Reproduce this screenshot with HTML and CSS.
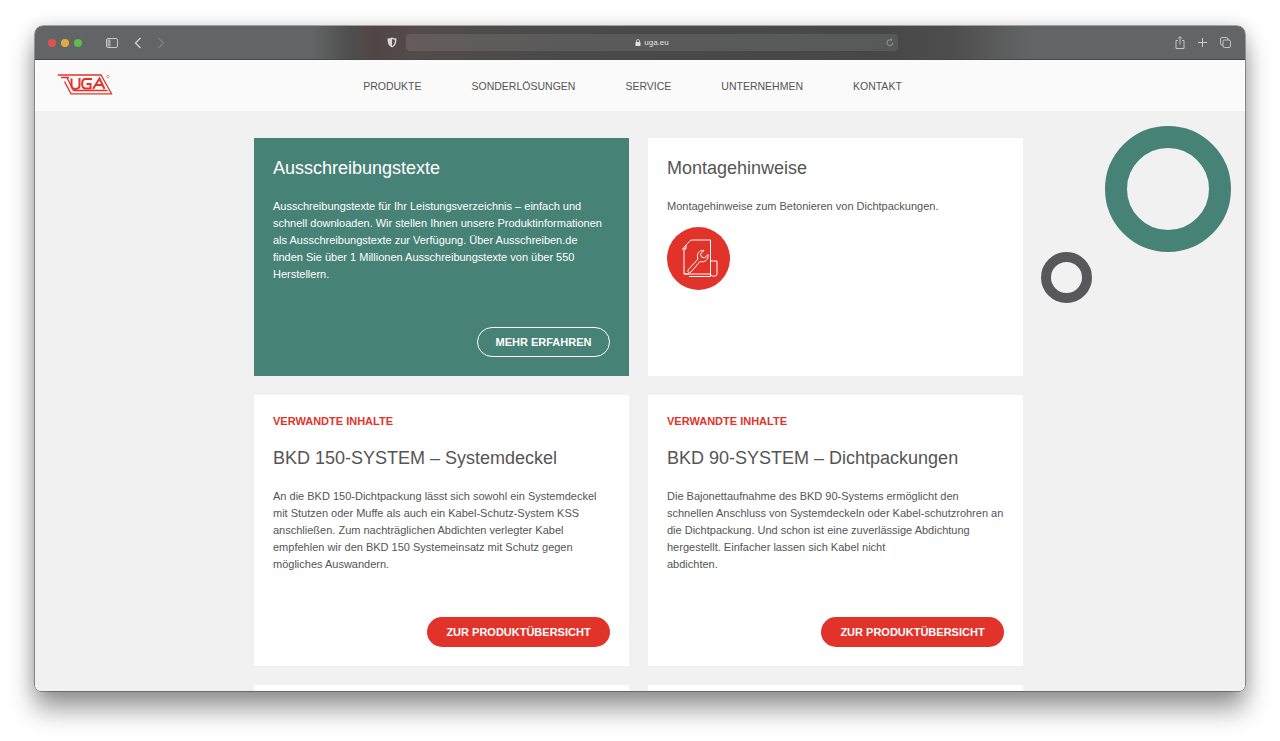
FILE: index.html
```html
<!DOCTYPE html>
<html lang="de">

<head>
  <meta charset="UTF-8" />
  <title>UGA</title>
  <link rel="stylesheet" href="styles.css">
</head>

<body>
  <div class="window">
    <div class="toolbar">
      <div class="lights">
        <span class="light red"></span>
        <span class="light yellow"></span>
        <span class="light green"></span>
      </div>
      <svg class="tool-icon sidebar-icon" width="12" height="10" viewBox="0 0 12 10">
        <rect x="0.5" y="0.5" width="11" height="9" rx="1.5" fill="none" stroke="#c9c9c9" />
        <rect x="1.5" y="1.5" width="3" height="7" fill="#a8a8a8" />
      </svg>
      <svg class="tool-icon back-icon" width="8" height="12" viewBox="0 0 8 12">
        <path d="M6.5 1 L1.5 6 L6.5 11" fill="none" stroke="#d4d4d4" stroke-width="1.3" />
      </svg>
      <svg class="tool-icon forward-icon" width="8" height="12" viewBox="0 0 8 12">
        <path d="M1.5 1 L6.5 6 L1.5 11" fill="none" stroke="#808080" stroke-width="1.3" />
      </svg>
      <svg class="tool-icon shield-icon" width="10" height="11" viewBox="0 0 10 11">
        <path d="M5 0.5 C3.5 1.2 2 1.5 0.5 1.5 C0.5 6 1.5 9 5 10.5 C8.500 9 9.500 6 9.500 1.500 C8 1.500 6.500 1.200 5 0.5 Z" fill="#d8d8d8" />
        <path d="M5 2 C6 2.400 7 2.700 8 2.800 C8 6 7.200 8 5 9.200 Z" fill="#5a5253" />
      </svg>
      <div class="address">
        <span class="address-text">
          <svg width="6" height="7" viewBox="0 0 6 7">
            <path d="M1.500 3 V2 a1.500 1.500 0 0 1 3 0 V3" fill="none" stroke="#e0e0e0" stroke-width="0.800" />
            <rect x="0.500" y="3" width="5" height="4" rx="0.600" fill="#e0e0e0" />
          </svg>
          uga.eu
        </span>
        <svg class="reload" width="8" height="9" viewBox="0 0 8 9">
          <path d="M6.800 4.800 A2.900 2.900 0 1 1 4 1.800 H5.500 M4.500 0.500 L5.800 1.800 L4.500 3" fill="none" stroke="#a6a6a6" stroke-width="0.800" />
        </svg>
      </div>
      <div class="tool-right">
        <svg width="10" height="13" viewBox="0 0 10 13">
          <path d="M3 4.500 H1 V12.500 H9 V4.500 H7 M5 8.500 V0.800 M3 2.600 L5 0.600 L7 2.600" fill="none" stroke="#cfcfcf" stroke-width="0.900" />
        </svg>
        <svg width="9" height="9" viewBox="0 0 9 9">
          <path d="M4.500 0 V9 M0 4.500 H9" fill="none" stroke="#cfcfcf" stroke-width="1" />
        </svg>
        <svg width="11" height="11" viewBox="0 0 11 11">
          <rect x="0.500" y="0.500" width="7.500" height="7.500" rx="1.500" fill="none" stroke="#cfcfcf" stroke-width="0.900" />
          <rect x="3" y="3" width="7.500" height="7.500" rx="1.500" fill="#636465" stroke="#cfcfcf" stroke-width="0.900" />
        </svg>
      </div>
    </div>

    <header class="site-header">
      <svg class="logo" width="56" height="21" viewBox="0 0 56 21">
        <g fill="none" stroke="#e2332a">
          <path d="M0.800 1 H44 L54.500 19.800 H14 L7.500 7.500" stroke-width="1.300" />
          <path d="M4 3.500 H12 M10 3.800 L16.500 16.500 H50.500" stroke-width="1.300" />
          <path d="M14.500 4.500 V11.500 C14.500 16 22.500 16 22.500 11.500 V4" stroke-width="2" />
          <path d="M35 5 H28.500 C24 5 24 14.500 28.500 14.500 H33.500 V10 H29.500" stroke-width="2" />
          <path d="M36 15 L42.500 4.500 L47.500 15 M38.500 11 H45.500" stroke-width="2" />
        </g>
        <circle cx="51" cy="2.500" r="1.300" fill="none" stroke="#e2332a" stroke-width="0.500" />
      </svg>
      <nav class="main-nav">
        <a href="#">PRODUKTE</a>
        <a href="#">SONDERLÖSUNGEN</a>
        <a href="#">SERVICE</a>
        <a href="#">UNTERNEHMEN</a>
        <a href="#">KONTAKT</a>
      </nav>
    </header>

    <main class="content">
      <div class="ring ring-big"></div>
      <div class="ring ring-small"></div>

      <div class="card-grid">
        <section class="card card-green">
          <h2>Ausschreibungstexte</h2>
          <p>Ausschreibungstexte für Ihr Leistungsverzeichnis – einfach und schnell downloaden. Wir stellen Ihnen unsere Produktinformationen als Ausschreibungstexte zur Verfügung. Über Ausschreiben.de finden Sie über 1 Millionen Ausschreibungstexte von über 550 Herstellern.</p>
          <a class="btn btn-outline" href="#">MEHR ERFAHREN</a>
        </section>

        <section class="card">
          <h2>Montagehinweise</h2>
          <p>Montagehinweise zum Betonieren von Dichtpackungen.</p>
          <svg class="doc-icon" width="63" height="63" viewBox="0 0 63 63">
            <circle cx="31.500" cy="31.500" r="31.500" fill="#e2332a" />
            <g fill="none" stroke="#fff" stroke-width="1">
              <path d="M19 18 L24 13 H43.500 V47 H17 V20 L19 18 V22 H15" transform="translate(0 0)" />
              <path d="M43.500 34 H50 V47 C50 50 44 50 43.500 47" />
              <path d="M17 47 H22 M43.500 47 V49.500 H22" />
              <path d="M21 43 L31 32 C29 27 32 23 37 23.500 L33.500 27 L34.500 30 L37.500 31 L41 27.500 C41.500 32.500 38 36 33 34.500 L24 45 C22 46 20 45 21 43 Z" />
            </g>
          </svg>
        </section>

        <section class="card card-related">
          <span class="kicker">VERWANDTE INHALTE</span>
          <h2>BKD 150-SYSTEM – Systemdeckel</h2>
          <p>An die BKD 150-Dichtpackung lässt sich sowohl ein Systemdeckel mit Stutzen oder Muffe als auch ein Kabel-Schutz-System KSS anschließen. Zum nachträglichen Abdichten verlegter Kabel empfehlen wir den BKD 150 Systemeinsatz mit Schutz gegen mögliches Auswandern.</p>
          <a class="btn btn-red" href="#">ZUR PRODUKTÜBERSICHT</a>
        </section>

        <section class="card card-related">
          <span class="kicker">VERWANDTE INHALTE</span>
          <h2>BKD 90-SYSTEM – Dichtpackungen</h2>
          <p>Die Bajonettaufnahme des BKD 90-Systems ermöglicht den schnellen Anschluss von Systemdeckeln oder Kabel-schutzrohren an die Dichtpackung. Und schon ist eine zuverlässige Abdichtung hergestellt. Einfacher lassen sich Kabel nicht<br>abdichten.</p>
          <a class="btn btn-red" href="#">ZUR PRODUKTÜBERSICHT</a>
        </section>

        <section class="card card-next"></section>
        <section class="card card-next"></section>
      </div>
    </main>
  </div>
</body>

</html>
```

FILE: styles.css
```css
html,
body {
  margin: 0;
  height: 741px;
  overflow: hidden;
  background: #fff;
}

body {
  font-family: "Liberation Sans", Arial, sans-serif;
  color: #555;
  padding: 26px 35px 0;
  box-sizing: border-box;
}

.window {
  height: 665px;
  border-radius: 8px 8px 6px 6px;
  overflow: hidden;
  display: flex;
  flex-direction: column;
  box-shadow: 0 18px 26px rgba(0, 0, 0, 0.4), 0 0 18px rgba(0, 0, 0, 0.16), 0 0 0 0.5px #666;
}

.toolbar {
  height: 34px;
  flex-shrink: 0;
  display: flex;
  align-items: center;
  box-sizing: border-box;
  border-bottom: 1px solid #484848;
  background: linear-gradient(90deg, #636465 0, #636465 23%, #4e4e4e 26%, #524645 28%, #544b4b 32%, #4a4a4a 42%, #474747 70%, #4e4e4e 76%, #636465 82%, #636465 100%);
}

.lights {
  display: flex;
  gap: 5px;
  margin-left: 13px;
}

.light {
  width: 8px;
  height: 8px;
  border-radius: 50%;
}

.red {
  background: #e0524d;
}

.yellow {
  background: #dcae3c;
}

.green {
  background: #5fb94f;
}

.sidebar-icon {
  margin-left: 24px;
}

.back-icon {
  margin-left: 16px;
}

.forward-icon {
  margin-left: 15px;
}

.shield-icon {
  margin-left: 222px;
}

.address {
  width: 492px;
  height: 17px;
  margin-left: 9px;
  border-radius: 4px;
  background: linear-gradient(90deg, #655c5c 0, #5b5a5a 30%, #575959 100%);
  position: relative;
  display: flex;
  align-items: center;
  justify-content: center;
}

.address-text {
  font-size: 8px;
  color: #e4e4e4;
  display: flex;
  align-items: center;
  gap: 3px;
}

.reload {
  position: absolute;
  right: 4px;
  top: 4px;
}

.tool-right {
  margin-left: auto;
  margin-right: 14px;
  display: flex;
  align-items: center;
  gap: 13px;
}

.site-header {
  height: 51px;
  flex-shrink: 0;
  background: #fafafa;
  position: relative;
  display: flex;
  align-items: center;
  justify-content: center;
}

.logo {
  position: absolute;
  left: 22px;
  top: 14px;
}

.main-nav {
  display: flex;
  gap: 50px;
  margin-left: -15px;
}

.main-nav a {
  font-size: 10.5px;
  color: #555;
  text-decoration: none;
}

.content {
  flex: 1;
  background: #f1f1f1;
  position: relative;
  overflow: hidden;
  padding-top: 27px;
}

.ring {
  position: absolute;
  border-radius: 50%;
  box-sizing: border-box;
}

.ring-big {
  width: 126px;
  height: 126px;
  left: 1070px;
  top: 15px;
  border: 22px solid #478276;
}

.ring-small {
  width: 51px;
  height: 51px;
  left: 1006px;
  top: 141px;
  border: 10px solid #58585a;
}

.card-grid {
  width: 769px;
  margin-left: 219px;
  display: grid;
  grid-template-columns: 375px 375px;
  grid-template-rows: 238px 271px 100px;
  gap: 19px;
}

.card {
  background: #fff;
  padding: 19px;
  box-sizing: border-box;
  display: flex;
  flex-direction: column;
  align-items: flex-start;
}

.card h2 {
  font-size: 18px;
  font-weight: 400;
  line-height: 22px;
  margin: 0 0 19px;
  color: #555;
}

.card p {
  font-size: 11px;
  line-height: 17px;
  margin: 0;
  color: #555;
}

.card-green {
  background: #478276;
}

.card-green h2,
.card-green p {
  color: #fff;
}

.kicker {
  font-size: 11px;
  font-weight: 700;
  line-height: 14px;
  color: #e2332a;
  margin-bottom: 19px;
}

.doc-icon {
  margin-top: 12px;
}

.btn {
  margin-top: auto;
  margin-left: auto;
  box-sizing: border-box;
  height: 30px;
  border-radius: 15px;
  font-size: 11px;
  font-weight: 700;
  display: flex;
  align-items: center;
  justify-content: center;
  text-decoration: none;
  color: #fff;
}

.btn-outline {
  width: 133px;
  border: 1.500px solid #fff;
}

.btn-red {
  width: 183px;
  background: #e2332a;
}
```
